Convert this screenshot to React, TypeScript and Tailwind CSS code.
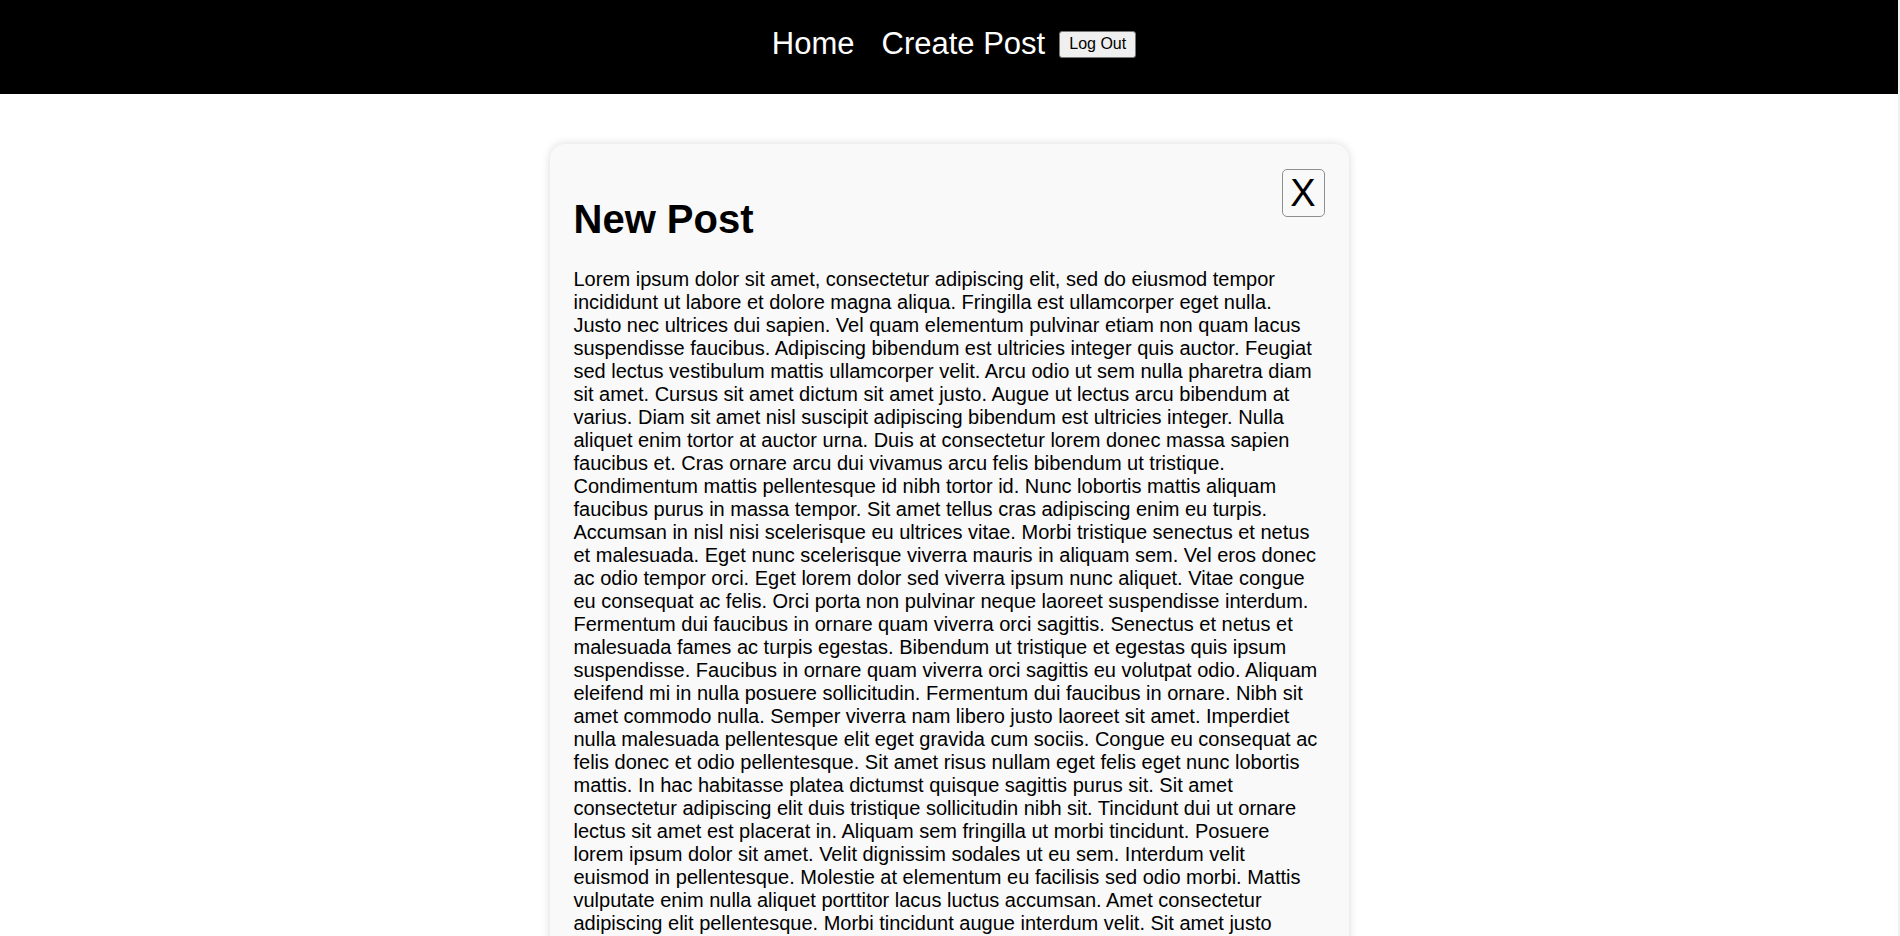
import React from "react";

const BODY =
  "Lorem ipsum dolor sit amet, consectetur adipiscing elit, sed do eiusmod tempor incididunt ut labore et dolore magna aliqua. Fringilla est ullamcorper eget nulla. Justo nec ultrices dui sapien. Vel quam elementum pulvinar etiam non quam lacus suspendisse faucibus. Adipiscing bibendum est ultricies integer quis auctor. Feugiat sed lectus vestibulum mattis ullamcorper velit. Arcu odio ut sem nulla pharetra diam sit amet. Cursus sit amet dictum sit amet justo. Augue ut lectus arcu bibendum at varius. Diam sit amet nisl suscipit adipiscing bibendum est ultricies integer. Nulla aliquet enim tortor at auctor urna. Duis at consectetur lorem donec massa sapien faucibus et. Cras ornare arcu dui vivamus arcu felis bibendum ut tristique. Condimentum mattis pellentesque id nibh tortor id. Nunc lobortis mattis aliquam faucibus purus in massa tempor. Sit amet tellus cras adipiscing enim eu turpis. Accumsan in nisl nisi scelerisque eu ultrices vitae. Morbi tristique senectus et netus et malesuada. Eget nunc scelerisque viverra mauris in aliquam sem. Vel eros donec ac odio tempor orci. Eget lorem dolor sed viverra ipsum nunc aliquet. Vitae congue eu consequat ac felis. Orci porta non pulvinar neque laoreet suspendisse interdum. Fermentum dui faucibus in ornare quam viverra orci sagittis. Senectus et netus et malesuada fames ac turpis egestas. Bibendum ut tristique et egestas quis ipsum suspendisse. Faucibus in ornare quam viverra orci sagittis eu volutpat odio. Aliquam eleifend mi in nulla posuere sollicitudin. Fermentum dui faucibus in ornare. Nibh sit amet commodo nulla. Semper viverra nam libero justo laoreet sit amet. Imperdiet nulla malesuada pellentesque elit eget gravida cum sociis. Congue eu consequat ac felis donec et odio pellentesque. Sit amet risus nullam eget felis eget nunc lobortis mattis. In hac habitasse platea dictumst quisque sagittis purus sit. Sit amet consectetur adipiscing elit duis tristique sollicitudin nibh sit. Tincidunt dui ut ornare lectus sit amet est placerat in. Aliquam sem fringilla ut morbi tincidunt. Posuere lorem ipsum dolor sit amet. Velit dignissim sodales ut eu sem. Interdum velit euismod in pellentesque. Molestie at elementum eu facilisis sed odio morbi. Mattis vulputate enim nulla aliquet porttitor lacus luctus accumsan. Amet consectetur adipiscing elit pellentesque. Morbi tincidunt augue interdum velit. Sit amet justo donec enim diam vulputate ut pharetra. Viverra tellus in hac habitasse platea dictumst vestibulum rhoncus est.";

const NavBar: React.FC = () => (
  <header className="shrink-0 h-[94px] bg-black pt-[26px]">
    <nav className="flex items-center justify-center pl-[10px] h-[36px]">
      <a href="#" className="text-white text-[31px] leading-[36px] mr-[27px]">
        Home
      </a>
      <a href="#" className="text-white text-[31px] leading-[36px] mr-[14px]">
        Create Post
      </a>
      <button className="h-[27px] px-[9px] text-[16px] leading-none text-black bg-[#efefef] border border-[#767676] rounded-[3px]">
        Log Out
      </button>
    </nav>
  </header>
);

const PostCard: React.FC = () => (
  <div className="w-[799px] mx-auto bg-[#f9f9f9] rounded-[15px] shadow-[0_0_10px_rgba(0,0,0,0.15)] px-[24px] pt-[25px] pb-[24px]">
    <div className="flex justify-between items-start">
      <h1 className="mt-[27px] mb-[26px] text-[40px] font-bold leading-[46px] text-black">
        New Post
      </h1>
      <button className="w-[43px] h-[48px] flex items-center justify-center border border-[#8f8f8f] rounded-[5px] text-[38px] leading-none text-black bg-transparent">
        X
      </button>
    </div>
    <p className="text-[20px] leading-[23px] text-black">{BODY}</p>
  </div>
);

export default function App() {
  return (
    <div className="flex h-[936px] overflow-hidden bg-white font-['Liberation_Sans',Arial,sans-serif]">
      <div className="flex-1 flex flex-col">
        <NavBar />
        <main className="shrink-0 pt-[50px]">
          <PostCard />
        </main>
      </div>
      <div className="w-[2px] bg-[#f1f1f1]" />
    </div>
  );
}
